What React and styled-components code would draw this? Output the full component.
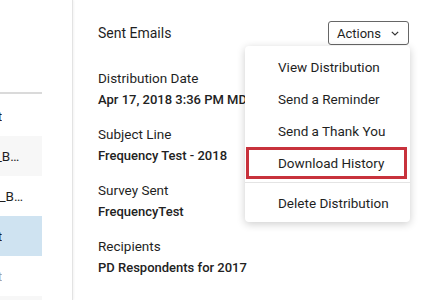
import React from "react";
import styled, { createGlobalStyle, css } from "styled-components";

const GlobalStyle = createGlobalStyle`
  html, body {
    margin: 0;
    padding: 0;
    background: #fff;
    font-family: Roboto, "Liberation Sans", sans-serif;
    color: #1f1f1f;
  }
`;

const Page = styled.div`
  display: grid;
  grid-template-columns: 73px 1fr;
  height: 300px;
  overflow: hidden;
`;

const Sidebar = styled.aside`
  border-right: 1px solid #e3e3e3;
  box-shadow: 1px 0 2px rgba(0, 0, 0, 0.05);
  padding-top: 92px;
  overflow: hidden;
`;

const ListClip = styled.div`
  width: 42px;
  overflow: hidden;
  border-top: 2px solid #dadada;
  padding-top: 2px;
`;

const List = styled.ul`
  list-style: none;
  margin: 0 0 0 -105px;
  padding: 0;
  width: 147px;
`;

const Row = styled.li`
  height: 40px;
  display: flex;
  align-items: center;
  padding: 0 14px 0 16px;
  font-size: 13.5px;
  white-space: nowrap;
  overflow: hidden;
  color: ${(p) => (p.muted ? "#9ea3a8" : "#1f1f1f")};
  background: ${(p) =>
    p.selected ? "#cfe3f1" : p.shaded ? "#f7f7f7" : "transparent"};
`;

const RowText = styled.span`
  overflow: hidden;
  text-overflow: ellipsis;
`;

const Main = styled.main`
  padding: 21px 16px 0 25px;
`;

const Header = styled.div`
  display: flex;
  align-items: center;
  justify-content: space-between;
  height: 24px;
  margin-bottom: 23px;
`;

const Title = styled.h2`
  margin: 0;
  font-size: 14px;
  font-weight: 400;
`;

const ActionsWrap = styled.div`
  position: relative;
`;

const ActionsButton = styled.button`
  display: flex;
  align-items: center;
  gap: 10px;
  height: 24px;
  padding: 0 9px 0 8px;
  border: 1px solid #666;
  border-radius: 3px;
  background: #fff;
  font-family: inherit;
  font-size: 13px;
  color: #1f1f1f;
`;

const Menu = styled.div`
  position: absolute;
  top: 25px;
  right: -1px;
  width: 165px;
  padding: 5px 0 3px;
  background: #fff;
  border-radius: 4px;
  box-shadow: 0 2px 9px rgba(0, 0, 0, 0.2);
  z-index: 2;
`;

const MenuItem = styled.div`
  height: 32px;
  display: flex;
  align-items: center;
  padding-left: 33px;
  font-size: 13.5px;
  color: #1f1f1f;
  ${(p) =>
    p.highlighted &&
    css`
      margin: 0 3px 0 1px;
      padding-left: 32px;
      box-shadow: inset 0 0 0 3px #c8323c;
    `}
`;

const MenuDivider = styled.div`
  height: 1px;
  background: #e4e4e4;
  margin: 3px 0 4px;
`;

const Fields = styled.dl`
  margin: 0;
  display: flex;
  flex-direction: column;
  gap: 14px;
`;

const Field = styled.div`
  display: flex;
  flex-direction: column;
  gap: 2px;
`;

const Label = styled.dt`
  font-size: 13.5px;
  line-height: 20px;
`;

const Value = styled.dd`
  margin: 0;
  font-size: 13px;
  font-weight: 500;
  line-height: 20px;
  white-space: nowrap;
  color: #222;
`;

const Chevron = () => (
  <svg width="8" height="5" viewBox="0 0 8 5" fill="none">
    <path d="M0.8 0.8 L4 4 L7.2 0.8" stroke="#333" strokeWidth="1.2" />
  </svg>
);

const rows = [
  { text: "Frequency Test" },
  { text: "SV_3kR9ZxQp_BDtw", shaded: true },
  { text: "SV_8fGm2LwY_BDtw" },
  { text: "Frequency Test", selected: true },
  { text: "Frequency Test", muted: true },
  { text: "Frequency Test", shaded: true },
];

const fields = [
  ["Distribution Date", "Apr 17, 2018 3:36 PM MDT"],
  ["Subject Line", "Frequency Test - 2018"],
  ["Survey Sent", "FrequencyTest"],
  ["Recipients", "PD Respondents for 2017"],
];

const App = () => (
  <>
    <GlobalStyle />
    <Page>
      <Sidebar>
        <ListClip>
          <List>
            {rows.map((r, i) => (
              <Row key={i} shaded={r.shaded} selected={r.selected} muted={r.muted}>
                <RowText>{r.text}</RowText>
              </Row>
            ))}
          </List>
        </ListClip>
      </Sidebar>
      <Main>
        <Header>
          <Title>Sent Emails</Title>
          <ActionsWrap>
            <ActionsButton>
              Actions
              <Chevron />
            </ActionsButton>
            <Menu>
              <MenuItem>View Distribution</MenuItem>
              <MenuItem>Send a Reminder</MenuItem>
              <MenuItem>Send a Thank You</MenuItem>
              <MenuItem highlighted>Download History</MenuItem>
              <MenuDivider />
              <MenuItem>Delete Distribution</MenuItem>
            </Menu>
          </ActionsWrap>
        </Header>
        <Fields>
          {fields.map(([label, value]) => (
            <Field key={label}>
              <Label>{label}</Label>
              <Value>{value}</Value>
            </Field>
          ))}
        </Fields>
      </Main>
    </Page>
  </>
);

export default App;
